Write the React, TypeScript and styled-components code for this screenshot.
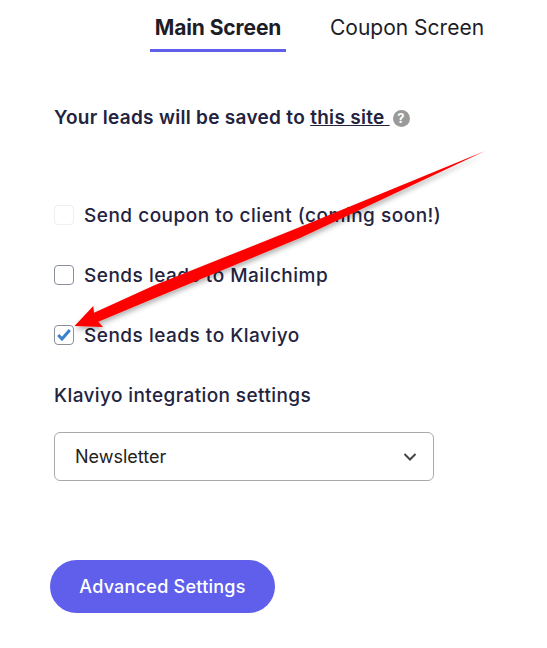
import React from 'react';
import styled, { createGlobalStyle } from 'styled-components';

const options = [
  { id: 'coupon', label: 'Send coupon to client (coming soon!)', disabled: true, checked: false },
  { id: 'mailchimp', label: 'Sends leads to Mailchimp', disabled: false, checked: false },
  { id: 'klaviyo', label: 'Sends leads to Klaviyo', disabled: false, checked: true },
];

const App: React.FC = () => {
  return (
    <>
      <GlobalStyle />
      <Page>
        <Tabs>
          <Tab $active>Main Screen</Tab>
          <Tab>Coupon Screen</Tab>
        </Tabs>
        <Saved>
          Your leads will be saved to <SiteLink href="#">this site </SiteLink>
          <Help>?</Help>
        </Saved>
        <OptionList>
          {options.map((option) => (
            <Option key={option.id}>
              <Box $disabled={option.disabled}>
                {option.checked && (
                  <svg width="14" height="12" viewBox="0 0 14 12">
                    <path d="M1.2 6 5 10 12.8 1" fill="none" stroke="#3a80cc" strokeWidth="3" />
                  </svg>
                )}
              </Box>
              {option.label}
            </Option>
          ))}
        </OptionList>
        <SettingsTitle>Klaviyo integration settings</SettingsTitle>
        <Select>
          Newsletter
          <svg width="14" height="8" viewBox="0 0 14 8">
            <path d="M1.5 1 7 6.5 12.5 1" fill="none" stroke="#444" strokeWidth="2" />
          </svg>
        </Select>
        <AdvancedButton>Advanced Settings</AdvancedButton>
        <Arrow width="547" height="648" viewBox="0 0 547 648">
          <defs>
            <filter id="arrow-shadow" x="-10%" y="-10%" width="120%" height="130%">
              <feDropShadow dx="1" dy="3" stdDeviation="2.5" floodColor="#000" floodOpacity="0.3" />
            </filter>
          </defs>
          <path
            d="M74.5 326 L93.3 306 L94 312.7 L155 285 L300 227 L485 151 L300 238 L155 298 L98.3 321.7 L103 327 Z"
            fill="#fe0000"
            filter="url(#arrow-shadow)"
          />
        </Arrow>
      </Page>
    </>
  );
};

export default App;

// Styling
const GlobalStyle = createGlobalStyle`
  body {
    margin: 0;
    background: #fff;
    font-family: Inter, "Noto Sans", sans-serif;
  }
`;

const Page = styled.div`
  position: relative;
  width: 547px;
  height: 648px;
  overflow: hidden;
  padding: 12px 0 0 54px;
  box-sizing: border-box;
`;

const Tabs = styled.div`
  display: flex;
  padding-left: 96px;
  gap: 44px;
`;

const Tab = styled.div<{ $active?: boolean }>`
  width: ${(p) => (p.$active ? '136px' : 'auto')};
  height: 40px;
  box-sizing: border-box;
  padding-top: 4px;
  text-align: center;
  font-size: 21px;
  line-height: 24px;
  font-weight: ${(p) => (p.$active ? 700 : 400)};
  letter-spacing: ${(p) => (p.$active ? '-0.1px' : '0')};
  color: #1d1d27;
  border-bottom: 3px solid ${(p) => (p.$active ? '#5f5fec' : 'transparent')};
  white-space: nowrap;
`;

const Saved = styled.div`
  margin-top: 53px;
  font-size: 19px;
  line-height: 26px;
  font-weight: 600;
  letter-spacing: 0.3px;
  color: #23233f;
  display: flex;
  align-items: center;
  white-space: pre;
`;

const SiteLink = styled.a`
  color: #23233f;
  text-decoration: underline;
`;

const Help = styled.span`
  width: 17px;
  height: 17px;
  margin-left: 3px;
  border-radius: 50%;
  background: #9a9a9a;
  color: #fff;
  font-size: 13px;
  font-weight: 700;
  line-height: 17px;
  text-align: center;
`;

const OptionList = styled.div`
  margin-top: 69px;
  display: flex;
  flex-direction: column;
  gap: 30px;
`;

const Option = styled.label`
  display: flex;
  align-items: center;
  gap: 10px;
  height: 30px;
  font-size: 19px;
  font-weight: 500;
  letter-spacing: 0.5px;
  color: #23233f;
  white-space: nowrap;
`;

const Box = styled.span<{ $disabled?: boolean }>`
  width: 20px;
  height: 20px;
  box-sizing: border-box;
  display: flex;
  align-items: center;
  justify-content: center;
  border-radius: 4px;
  background: #fff;
  border: 1px solid ${(p) => (p.$disabled ? '#eeeeef' : '#8a8f9c')};
`;

const SettingsTitle = styled.div`
  margin-top: 31px;
  font-size: 19px;
  line-height: 30px;
  font-weight: 500;
  letter-spacing: 0.4px;
  color: #23233f;
`;

const Select = styled.div`
  margin-top: 21px;
  width: 380px;
  height: 49px;
  box-sizing: border-box;
  padding: 0 16px 0 20px;
  display: flex;
  align-items: center;
  justify-content: space-between;
  border: 1px solid #aaa;
  border-radius: 6px;
  font-size: 18px;
  color: #222;
`;

const AdvancedButton = styled.button`
  display: block;
  margin: 79px 0 0 -4px;
  width: 225px;
  height: 53px;
  border: none;
  border-radius: 27px;
  background: #5f5fec;
  color: #fff;
  font-family: inherit;
  font-size: 18px;
  font-weight: 500;
  letter-spacing: 0.25px;
`;

const Arrow = styled.svg`
  position: absolute;
  top: 0;
  left: 0;
  pointer-events: none;
`;
